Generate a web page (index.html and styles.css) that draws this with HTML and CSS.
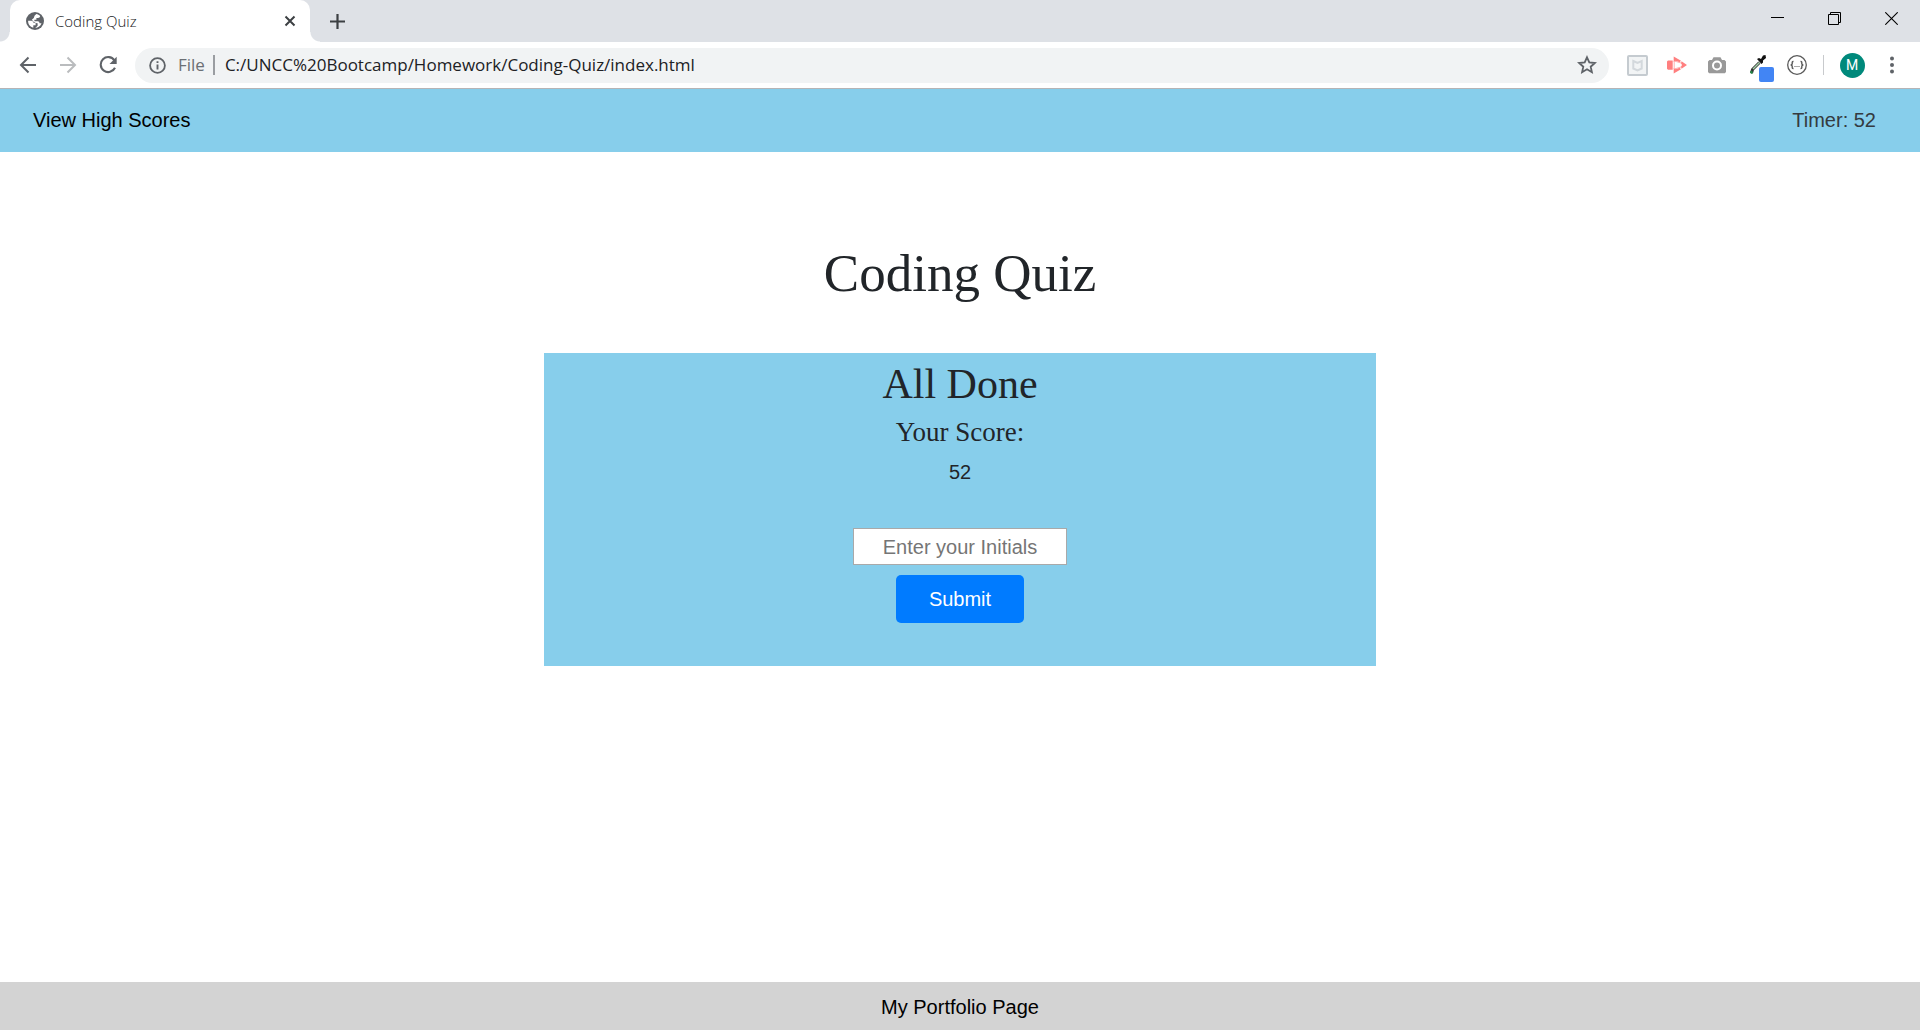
FILE: index.html
```html
<!DOCTYPE html>
<html lang="en">
<head>
<meta charset="utf-8">
<meta name="viewport" content="width=device-width, initial-scale=1">
<title>Coding Quiz</title>
<link rel="stylesheet" href="styles.css">
</head>
<body>
<div class="browser">
  <div class="tab-strip">
    <div class="tab">
      <svg class="tab-icon" width="18" height="18" viewBox="0 0 18 18" aria-hidden="true">
        <circle cx="9" cy="9" r="9" fill="#5f6368"/>
        <path d="M2.100 8.700H5.500Q7.500 8.900 7.700 11H9.600V13.200H7.300V15.700C4 14.800 2 12.200 2.100 8.700ZM10.300 2.100C11.800 2.300 13.200 3 14.200 4.200Q13.800 5.800 12 5.900H10.400V7.700H8.400V9.200H11.800Q13.500 9.400 13.600 11.200H15.500C14.500 14 12.300 15.700 9.300 15.900L11.600 13.700V11.300L9.800 10.900L7.900 9.900L5.800 7.700L7.800 5.900Q8 3.800 10.300 2.100Z" fill="#fff"/>
      </svg>
      <span class="tab-title">Coding Quiz</span>
      <button class="icon-button tab-close" aria-label="Close tab">
        <svg width="12" height="12" viewBox="0 0 12 12"><path d="M1.500 1.500L10.500 10.500M10.500 1.500L1.500 10.500" stroke="#3c4043" stroke-width="2"/></svg>
      </button>
    </div>
    <button class="icon-button new-tab" aria-label="New tab">
      <svg width="15" height="15" viewBox="0 0 15 15"><path d="M7.500 0V15M0 7.500H15" stroke="#3c4043" stroke-width="2.200"/></svg>
    </button>
    <div class="window-controls">
      <button class="icon-button window-button" aria-label="Minimize">
        <svg width="13" height="13" viewBox="0 0 13 13"><path d="M0 5.500H13" stroke="#000"/></svg>
      </button>
      <button class="icon-button window-button" aria-label="Restore">
        <svg width="13" height="13" viewBox="0 0 13 13" fill="none" stroke="#000"><path d="M.5 2.500H10.500V12.500H.5ZM2.500 2.500V.5H12.500V10.500H10.500"/></svg>
      </button>
      <button class="icon-button window-button" aria-label="Close window">
        <svg width="13" height="13" viewBox="0 0 13 13"><path d="M.3.3L12.700 12.700M12.700.3L.3 12.700" stroke="#000" stroke-width="1.100"/></svg>
      </button>
    </div>
  </div>

  <div class="toolbar">
    <button class="icon-button tool" aria-label="Back">
      <svg width="18" height="18" viewBox="0 0 18 18" fill="none" stroke="#5f6368" stroke-width="2"><path d="M17 9H2.500M9.500 1.500L2 9L9.500 16.500"/></svg>
    </button>
    <button class="icon-button tool" aria-label="Forward" disabled>
      <svg width="18" height="18" viewBox="0 0 18 18" fill="none" stroke="#babcbe" stroke-width="2"><path d="M1 9H15.500M8.500 1.500L16 9L8.500 16.500"/></svg>
    </button>
    <button class="icon-button tool" aria-label="Reload">
      <svg width="18" height="18" viewBox="0 0 18 18"><path d="M15.400 4.300A7.500 7.500 0 1 0 16 11.800" fill="none" stroke="#5f6368" stroke-width="2.100"/><path d="M17.700.8V8H10.500Z" fill="#5f6368"/></svg>
    </button>
    <div class="address-bar">
      <svg width="17" height="17" viewBox="0 0 17 17" aria-hidden="true"><circle cx="8.500" cy="8.500" r="7.400" fill="none" stroke="#5f6368" stroke-width="1.800"/><path d="M8.500 7.500V12.600M8.500 4.300V6.100" stroke="#5f6368" stroke-width="1.900"/></svg>
      <label class="scheme" for="url">File</label>
      <input class="url" id="url" type="text" value="C:/UNCC%20Bootcamp/Homework/Coding-Quiz/index.html">
      <button class="icon-button star" aria-label="Bookmark this page">
        <svg width="20" height="20" viewBox="0 0 20 20"><path d="M10 2.300L12.300 7.400L17.900 8L13.700 11.700L14.900 17.200L10 14.300L5.100 17.200L6.300 11.700L2.100 8L7.700 7.400Z" fill="none" stroke="#5f6368" stroke-width="1.800"/></svg>
      </button>
    </div>
    <div class="extensions">
      <button class="icon-button tool" aria-label="Web protection">
        <svg width="21" height="21" viewBox="0 0 21 21"><rect x="1" y="1" width="19" height="19" rx="1" fill="#f2f4f5" stroke="#c5cbd0" stroke-width="2"/><path d="M6.300 6L10.500 8L14.700 6V13.500L10.500 15.500L6.300 13.500Z" fill="none" stroke="#d3d8dc" stroke-width="2"/></svg>
      </button>
      <button class="icon-button tool" aria-label="Screen recorder">
        <svg width="20" height="18" viewBox="0 0 20 18"><path d="M0 5.500L1 4.500H5.700V13.700H1L0 12.700ZM6.700.5L14 4.800L12.500 6.200L9 5.100L6.700 6.100ZM6.700 17.500L14 13.200L12.500 11.800L9 12.900L6.700 11.900ZM14.500 5.200L20 9L14.500 12.800L14 10.800L15 9L14 7.200Z" fill="#ff7f7f"/><path d="M7.200 5V13M8 5.200L14 7M8 12.800L14 11" stroke="#ffb0b0"/></svg>
      </button>
      <button class="icon-button tool" aria-label="Screenshot">
        <svg width="18" height="18" viewBox="0 0 18 18"><path d="M1.500 4H4L5.500 1.300H12.500L14 4H16.500L18 5.500V16L16.800 17.200H1.200L0 16V5.500Z" fill="#999"/><circle cx="9" cy="9.500" r="4" fill="#999" stroke="#fff" stroke-width="2"/></svg>
      </button>
      <button class="icon-button tool" aria-label="Color picker">
        <svg width="34" height="34" viewBox="-9 -6 34 34"><path d="M10.500 8.500L3.500 15.500L2.500 19" fill="none" stroke="#333" stroke-width="3"/><path d="M10.500 8.500L4 15" stroke="#a5d2a9" stroke-width="1.400"/><path d="M1.500 17L3 16.500L4 19L2.500 20L1 18.700Z" fill="#278447"/><path d="M8 5L10 4L12 5L14 1.500L16.500 1L17 4L14 6.500L14 8.500L12.500 10Z" fill="#111"/><rect x="10" y="13" width="15" height="15" rx="2" fill="#4285f4"/></svg>
      </button>
      <button class="icon-button tool" aria-label="JSON viewer">
        <svg width="20" height="20" viewBox="0 0 20 20" fill="none" stroke="#5a5a5a"><circle cx="10" cy="10" r="9.300" stroke-width="1.300"/><path d="M6.500 6.500H6Q5.200 6.500 5.200 7.500V9L4.200 10L5.200 11V12.500Q5.200 13.500 6 13.500H6.500M13.500 6.500H14Q14.800 6.500 14.800 7.500V9L15.800 10L14.800 11V12.500Q14.800 13.500 14 13.500H13.500" stroke-width="1.400"/><path d="M7.500 11.500H12.500" stroke-dasharray="1 1"/></svg>
      </button>
    </div>
    <button class="icon-button tool" aria-label="Profile"><span class="avatar">M</span></button>
    <button class="icon-button tool" aria-label="Menu">
      <svg width="4" height="18" viewBox="0 0 4 18" fill="#5f6368"><circle cx="2" cy="2.500" r="2"/><circle cx="2" cy="9" r="2"/><circle cx="2" cy="15.500" r="2"/></svg>
    </button>
  </div>
</div>

<header class="site-header">
  <a class="scores-link" href="#scores">View High Scores</a>
  <span class="timer">Timer: 52</span>
</header>

<main class="content">
  <h1 class="title">Coding Quiz</h1>
  <section class="card">
    <h2 class="card-title">All Done</h2>
    <h3 class="card-subtitle">Your Score:</h3>
    <p class="score">52</p>
    <form class="score-form">
      <input class="initials" type="text" placeholder="Enter your Initials" aria-label="Enter your Initials">
      <button class="submit" type="button">Submit</button>
    </form>
  </section>
</main>

<footer class="site-footer">
  <a class="footer-link" href="#portfolio">My Portfolio Page</a>
</footer>
</body>
</html>
```
FILE: styles.css
```css
* {
  box-sizing: border-box;
}

body {
  display: flex;
  flex-direction: column;
  min-height: 100vh;
  margin: 0;
  background: #fff;
  color: #212529;
  font: 20px/30px "Liberation Sans", Arial, sans-serif;
}

svg {
  display: block;
  flex: none;
}

a {
  color: #000;
  text-decoration: none;
}

/* Browser frame */
.browser {
  border-bottom: 1px solid #b6b4b6;
  font-family: "Open Sans", "Segoe UI", sans-serif;
}

.icon-button {
  display: flex;
  align-items: center;
  justify-content: center;
  flex: none;
  padding: 0;
  border: 0;
  background: none;
}

.tab-strip {
  display: flex;
  height: 42px;
  padding-left: 10px;
  background: #dee1e6;
}

.tab {
  position: relative;
  display: flex;
  align-items: center;
  width: 300px;
  padding: 0 10px 0 16px;
  border-radius: 10px 10px 0 0;
  background: #fff;
}

.tab::before,
.tab::after {
  content: "";
  position: absolute;
  bottom: 0;
  width: 10px;
  height: 10px;
}

.tab::before {
  right: 100%;
  background: radial-gradient(circle at 0 0, transparent 9px, #fff 10px);
}

.tab::after {
  left: 100%;
  background: radial-gradient(circle at 100% 0, transparent 9px, #fff 10px);
}

.tab-title {
  flex: 1;
  margin-left: 11px;
  color: #202124;
  font-size: 15px;
  font-weight: 300;
}

.tab-close {
  width: 20px;
}

.new-tab {
  width: 35px;
  margin-left: 10px;
}

.window-controls {
  display: flex;
  height: 36px;
  margin-left: auto;
}

.window-button {
  width: 57px;
}

.toolbar {
  display: flex;
  align-items: center;
  height: 46px;
  padding: 0 8px;
  background: #fff;
}

.tool {
  width: 40px;
  height: 36px;
}

.address-bar {
  display: flex;
  align-items: center;
  flex: 1;
  height: 35px;
  margin: 0 8px 0 7px;
  padding: 0 12px 0 14px;
  border-radius: 18px;
  background: #f1f3f4;
}

.scheme {
  margin-left: 12px;
  padding-right: 8px;
  border-right: 2px solid #9a9da1;
  color: #6b6f74;
  font-size: 17px;
  line-height: 20px;
}

.url {
  flex: 1;
  min-width: 0;
  padding: 0 0 0 10px;
  border: 0;
  background: none;
  color: #202124;
  font: 17px/24px "Open Sans", "Segoe UI", sans-serif;
}

.extensions {
  display: flex;
  margin-right: 8px;
  padding-right: 7px;
  background: linear-gradient(#c8cacd, #c8cacd) right center / 1px 20px no-repeat;
}

.avatar {
  width: 25px;
  height: 25px;
  border-radius: 50%;
  background: #00897b;
  color: #fff;
  font: 14px/25px Roboto, sans-serif;
}

/* Quiz page */
.site-header {
  display: flex;
  justify-content: space-between;
  padding: 16px 44px 17px 33px;
  background: #87ceeb;
}

.timer {
  color: #343a40;
}

.content {
  flex: 1;
  padding: 89px 16px 48px;
  text-align: center;
}

.title,
.card-title,
.card-subtitle {
  margin: 0;
  font-family: Georgia, "Liberation Serif", serif;
  font-weight: 400;
}

.title {
  margin-bottom: 48px;
  font-size: 53px;
  line-height: 64px;
}

.card {
  max-width: 832px;
  margin: 0 auto;
  padding: 7px 16px 43px;
  background: #87ceeb;
}

.card-title {
  margin-bottom: 8px;
  font-size: 42px;
  line-height: 48px;
}

.card-subtitle {
  margin-bottom: 9px;
  font-size: 27px;
  line-height: 32px;
}

.score {
  margin: 0 0 41px;
}

.score-form {
  display: flex;
  flex-direction: column;
  align-items: center;
  gap: 10px;
}

.initials {
  width: 214px;
  height: 37px;
  padding: 3px 2px 2px;
  border: 1px solid #a9a9a9;
  background: #fff;
  color: #212529;
  font: inherit;
  text-align: center;
}

.initials::placeholder {
  color: #757575;
}

.submit {
  width: 128px;
  height: 48px;
  padding: 0;
  border: 0;
  border-radius: 5px;
  background: #007bff;
  color: #fff;
  font: inherit;
}

.site-footer {
  padding: 10px 16px 8px;
  background: #d3d3d3;
  text-align: center;
}
```
